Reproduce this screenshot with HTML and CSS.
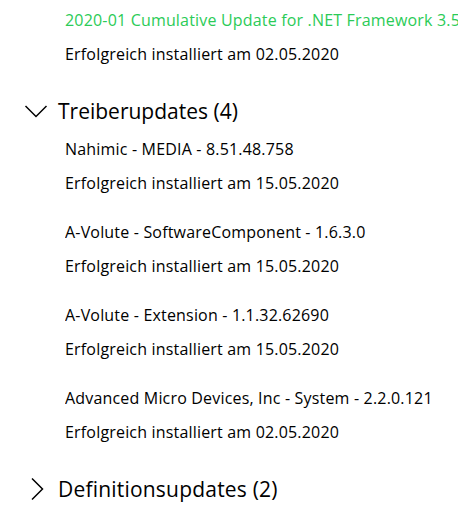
FILE: index.html
```html
<!DOCTYPE html>
<html lang="de">
<head>
<meta charset="utf-8">
<link rel="stylesheet" href="styles.css">
</head>
<body>
<div class="page">
  <div class="item first">
    <div class="item-title accent">2020-01 Cumulative Update for .NET Framework 3.5</div>
    <div class="item-status">Erfolgreich installiert am 02.05.2020</div>
  </div>

  <section class="group">
    <div class="group-header">
      <svg class="chevron" width="24" height="14" viewBox="0 0 24 14"><polyline points="1.5,2 12,12.5 22.5,2" fill="none" stroke="#000" stroke-width="1.5"/></svg>
      <h2 class="group-title">Treiberupdates (4)</h2>
    </div>
    <div class="items">
      <div class="item">
        <div class="item-title">Nahimic - MEDIA - 8.51.48.758</div>
        <div class="item-status">Erfolgreich installiert am 15.05.2020</div>
      </div>
      <div class="item">
        <div class="item-title">A-Volute - SoftwareComponent - 1.6.3.0</div>
        <div class="item-status">Erfolgreich installiert am 15.05.2020</div>
      </div>
      <div class="item">
        <div class="item-title">A-Volute - Extension - 1.1.32.62690</div>
        <div class="item-status">Erfolgreich installiert am 15.05.2020</div>
      </div>
      <div class="item">
        <div class="item-title">Advanced Micro Devices, Inc - System - 2.2.0.121</div>
        <div class="item-status">Erfolgreich installiert am 02.05.2020</div>
      </div>
    </div>
  </section>

  <section class="group">
    <div class="group-header">
      <svg class="chevron" width="24" height="24" viewBox="0 0 24 24"><polyline points="8,1.5 18.5,12 8,22.5" fill="none" stroke="#000" stroke-width="1.5"/></svg>
      <h2 class="group-title wide">Definitionsupdates (2)</h2>
    </div>
  </section>
</div>
</body>
</html>
```

FILE: styles.css
```css
html, body {
  margin: 0;
  padding: 0;
  background: #ffffff;
  overflow: hidden;
}

body {
  font-family: "Open Sans", "Noto Sans", sans-serif;
  color: #000000;
  width: 458px;
  height: 510px;
}

.page {
  display: flex;
  flex-direction: column;
  padding-top: 10px;
  overflow: hidden;
}

.item {
  display: flex;
  flex-direction: column;
  gap: 14px;
  padding-left: 65px;
  white-space: nowrap;
  min-width: 0;
}

.item-title,
.item-status {
  font-size: 16px;
  line-height: 20px;
  letter-spacing: 0.18px;
  overflow: hidden;
}

.accent {
  color: #2bcb57;
}

.group {
  display: flex;
  flex-direction: column;
  margin-top: 33px;
}

.group-header {
  display: flex;
  align-items: center;
  height: 28px;
}

.chevron {
  display: block;
  margin-left: 24px;
  width: 24px;
  flex: none;
}

.group-title {
  margin: 0 0 0 10px;
  font-size: 21px;
  font-weight: 400;
  line-height: 28px;
  white-space: nowrap;
}

.group-title.wide {
  letter-spacing: 0.2px;
}

.items {
  display: flex;
  flex-direction: column;
  gap: 29px;
  margin-top: 14px;
}
```
